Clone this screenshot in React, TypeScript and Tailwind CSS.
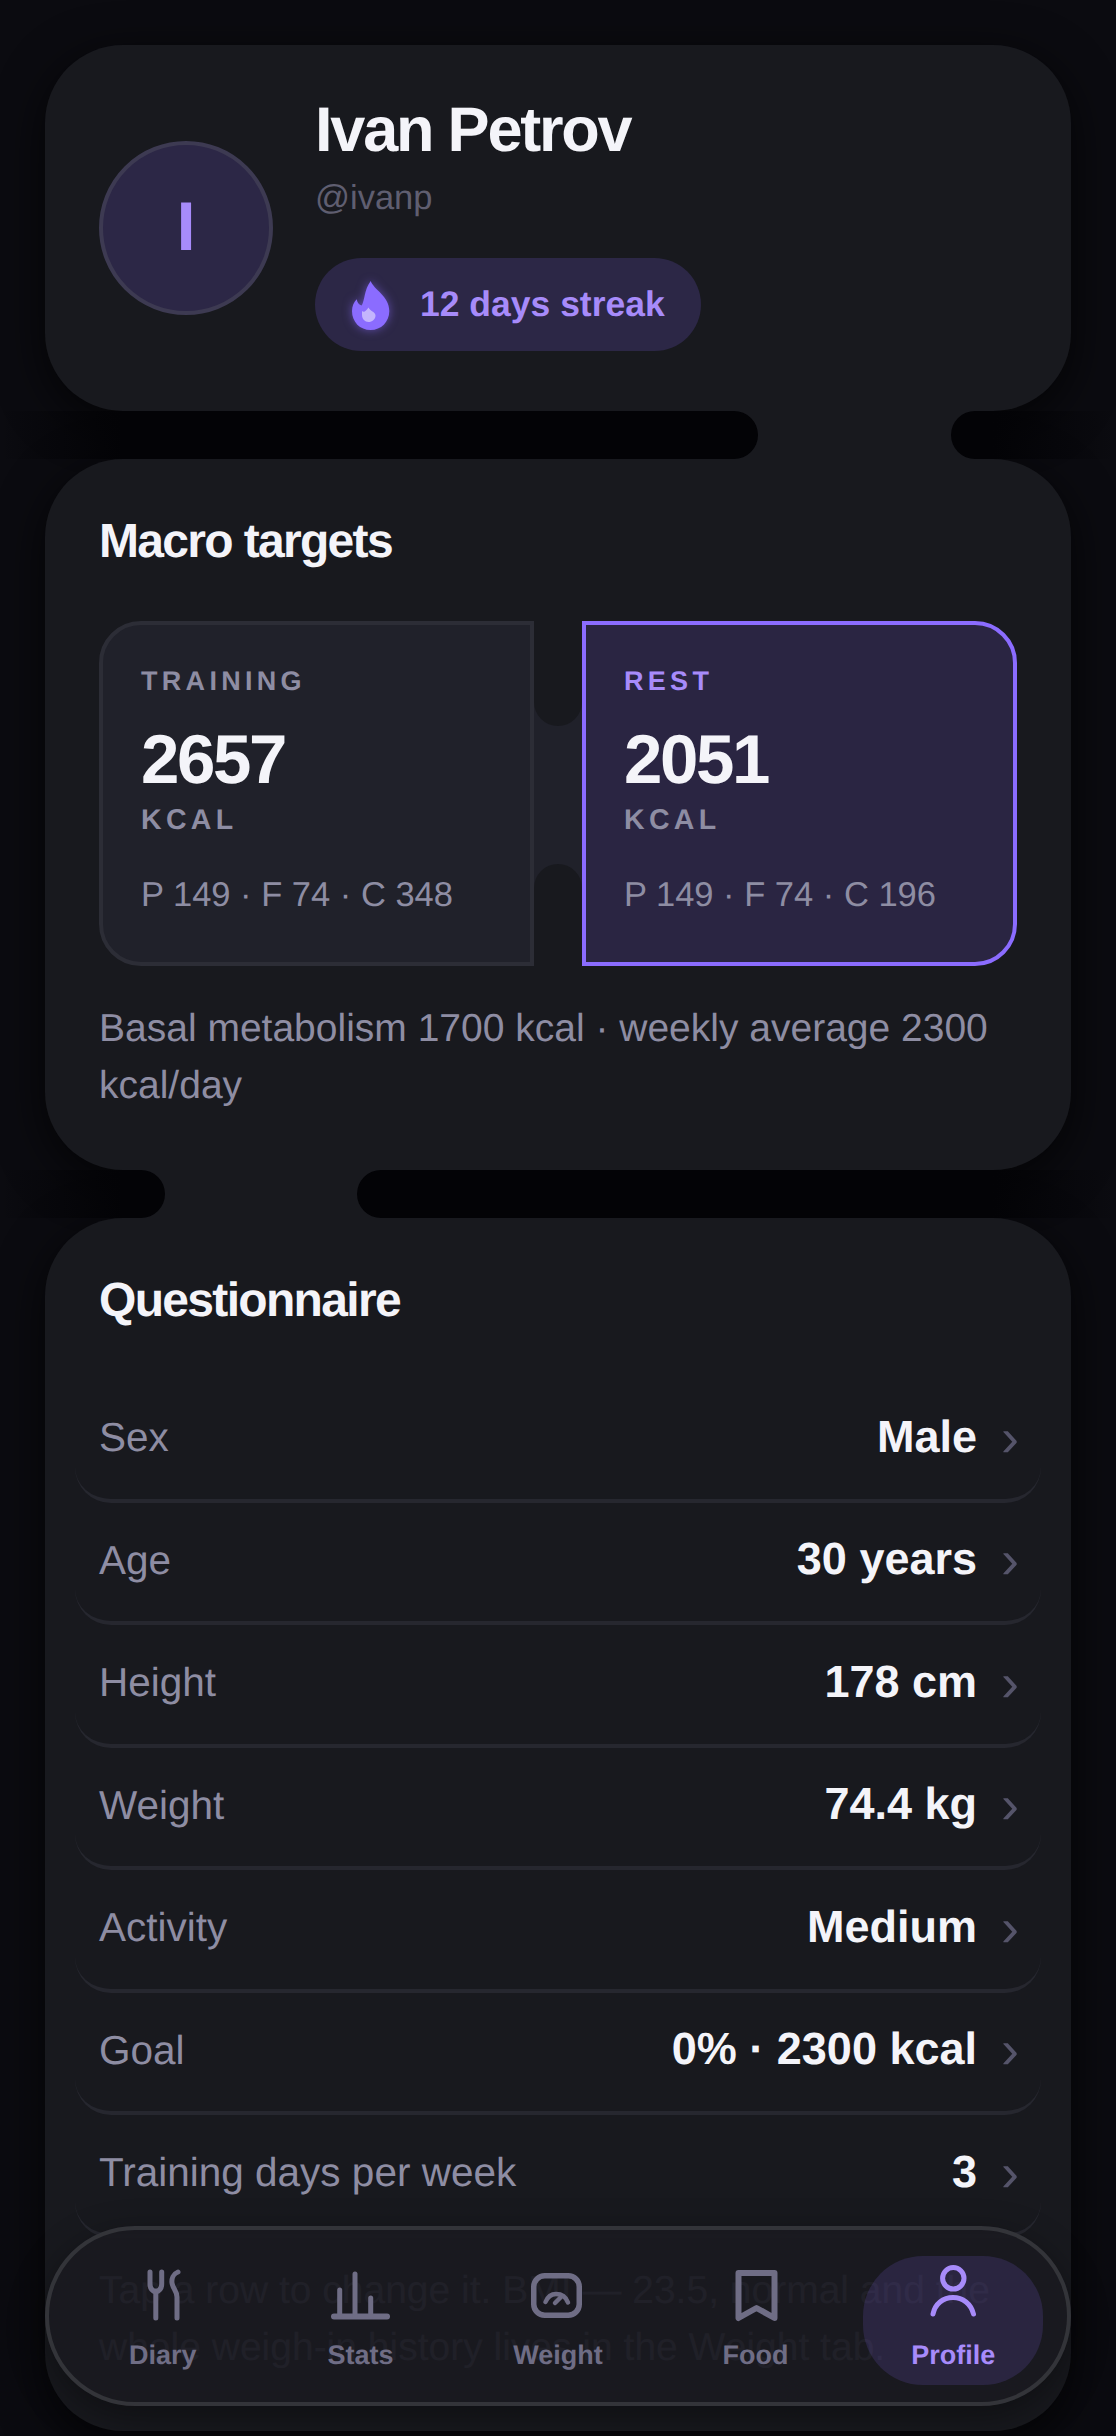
import React from "react";

const rows = [
  { label: "Sex", value: "Male" },
  { label: "Age", value: "30 years" },
  { label: "Height", value: "178 cm" },
  { label: "Weight", value: "74.4 kg" },
  { label: "Activity", value: "Medium" },
  { label: "Goal", value: "0% · 2300 kcal" },
  { label: "Training days per week", value: "3" },
];

function FlameIcon() {
  return (
    <svg width="42" height="54" viewBox="0 0 42 54" className="shrink-0 [filter:drop-shadow(0_0_5px_rgba(139,108,255,0.55))]">
      <path
        fill="#8b6cff"
        d="M20.7 3C24 12 39.3 18 39.3 33C39.3 44 31 52 20.7 52C10 52 2 44 2 33C2 28 4 24 6.7 21.3C7.5 25 9 27 11.7 27.5C15 22 14 12 20.7 3Z"
      />
      <path
        fill="#c4b5fd"
        d="M12 33C14 35 16 33 18.5 29.5C20 33 25.5 34 25.5 37.5C25.5 41.5 22 44 18.5 44C15 44 12 41 12 37Z"
      />
    </svg>
  );
}

function DiaryIcon() {
  return (
    <svg width="72" height="72" viewBox="0 0 72 72" fill="none" stroke="currentColor" strokeWidth="5" strokeLinecap="round" strokeLinejoin="round">
      <path d="M23 11V23C23 27 25 30 28.8 31C32.6 30 34.7 27 34.7 23V11" />
      <path d="M28.8 30V57" />
      <path d="M51 11C46 13 44.5 18 45 22C45.5 27 50 30 50 36V57" />
    </svg>
  );
}

function StatsIcon() {
  return (
    <svg width="72" height="72" viewBox="0 0 72 72" fill="none" stroke="currentColor" strokeWidth="5" strokeLinecap="round">
      <path d="M10 55.5H63" strokeWidth="6" />
      <path d="M15.7 55V29" />
      <path d="M31 55V13" />
      <path d="M46.7 55V37" />
    </svg>
  );
}

function WeightIcon() {
  return (
    <svg width="72" height="72" viewBox="0 0 72 72" fill="none" stroke="currentColor" strokeWidth="5.5" strokeLinecap="round" strokeLinejoin="round">
      <rect x="11.75" y="14.75" width="45.5" height="39.5" rx="11" />
      <path d="M23.5 41C26 35 29 33 34 33C40 33 44 36 46 41.5" strokeWidth="4.5" />
      <path d="M33 42L39 36" strokeWidth="4.5" />
    </svg>
  );
}

function FoodIcon() {
  return (
    <svg width="72" height="72" viewBox="0 0 72 72" fill="none" stroke="currentColor" strokeWidth="6" strokeLinejoin="round">
      <path d="M18.5 12H54.5V57L36.5 47L18.5 57Z" />
    </svg>
  );
}

function ProfileIcon() {
  return (
    <svg width="72" height="72" viewBox="0 0 72 72" fill="none" stroke="currentColor" strokeWidth="5" strokeLinecap="round">
      <circle cx="36.3" cy="17.3" r="10.7" />
      <path d="M16 53C18 43 26 36.5 36 36.5C46 36.5 54 43 56.5 53" />
    </svg>
  );
}

const navItems = [
  { label: "Diary", Icon: DiaryIcon },
  { label: "Stats", Icon: StatsIcon },
  { label: "Weight", Icon: WeightIcon },
  { label: "Food", Icon: FoodIcon },
  { label: "Profile", Icon: ProfileIcon, active: true },
];

function MacroTile({ name, kcal, macros, active }: { name: string; kcal: string; macros: string; active?: boolean }) {
  return (
    <div
      className={
        active
          ? "flex-1 h-[345px] border-4 border-[#8b6cff] bg-[#2a2542] rounded-r-[42px] pl-[38px] pt-[40px]"
          : "flex-1 h-[345px] border-4 border-[#2c2d36] bg-[#20212a] rounded-l-[42px] pl-[38px] pt-[40px]"
      }
    >
      <div className={active ? "text-[27px] leading-[33px] font-bold tracking-[4.3px] text-[#a78bfa]" : "text-[27px] leading-[33px] font-bold tracking-[4.3px] text-[#8e8da3]"}>
        {name}
      </div>
      <div className="mt-[29px] text-[69px] leading-[66px] font-bold tracking-[-2.4px] text-[#f4f4f9]">{kcal}</div>
      <div className="mt-[11px] text-[28.5px] leading-[33px] font-bold tracking-[4.3px] text-[#8e8da3]">KCAL</div>
      <div className="mt-[34px] text-[34.5px] leading-[48px] text-[#8e8da3]">{macros}</div>
    </div>
  );
}

// Bridge between two stacked cards: dark gutter with a card-coloured neck cut through it.
function CardBridge({ leftWidth, neckWidth, rightWidth }: { leftWidth: "narrow" | "wide"; neckWidth: string; rightWidth: "narrow" | "wide" }) {
  return (
    <div className="relative z-10 -mx-[45px] flex h-12">
      <div className="w-[123px] bg-gradient-to-r from-[#03030600] to-[#030306]" />
      <div className="flex flex-1 bg-[#18191e]">
        <div className={leftWidth === "narrow" ? "w-[42px] rounded-r-3xl bg-[#030306]" : "flex-1 rounded-r-3xl bg-[#030306]"} />
        <div className={neckWidth} />
        <div className={rightWidth === "narrow" ? "w-[42px] rounded-l-3xl bg-[#030306]" : "flex-1 rounded-l-3xl bg-[#030306]"} />
      </div>
      <div className="w-[123px] bg-gradient-to-l from-[#03030600] to-[#030306]" />
    </div>
  );
}

export default function App() {
  return (
    <div className="relative h-[2436px] overflow-hidden bg-[#0b0b10] font-['Liberation_Sans',Arial,sans-serif] [text-rendering:geometricPrecision]">
      <div className="flex flex-col px-[45px] pt-[45px]">
        {/* profile header */}
        <section className="flex h-[366px] items-center gap-[42px] rounded-[78px] bg-[#18191e] px-[54px] shadow-[0_12px_48px_rgba(0,0,0,0.7)]">
          <div className="flex h-[174px] w-[174px] shrink-0 items-center justify-center rounded-full border-4 border-[#3d3a52] bg-[#2c2746] pb-[3px] text-[69px] font-bold text-[#a78bfa]">
            I
          </div>
          <div className="mb-[9px] flex flex-col">
            <h1 className="text-[63px] leading-[69px] font-bold tracking-[-2.2px] text-[#f4f4f9]">Ivan Petrov</h1>
            <div className="mt-[5.5px] text-[34.5px] leading-[54px] text-[#5f5e70]">@ivanp</div>
            <div className="mt-[33.5px] flex h-[93px] w-fit items-center gap-[28px] rounded-full bg-[#2c2746] pl-[35px] pr-[36px]">
              <FlameIcon />
              <span className="text-[35.5px] font-bold text-[#a78bfa]">12 days streak</span>
            </div>
          </div>
        </section>

        <CardBridge leftWidth="wide" neckWidth="w-[193px]" rightWidth="narrow" />

        <section className="rounded-[78px] bg-[#18191e] px-[54px] pt-[54px] pb-[56.5px] shadow-[0_12px_48px_rgba(0,0,0,0.7)]">
          <h2 className="text-[48px] leading-[57px] font-bold tracking-[-1.68px] text-[#f4f4f9]">Macro targets</h2>
          <div className="mt-[51px] flex">
            <MacroTile name="TRAINING" kcal="2657" macros="P 149 · F 74 · C 348" />
            <div className="flex w-12 flex-col justify-between bg-[#20212a]">
              <div className="h-[105px] rounded-b-3xl bg-[#18191e]" />
              <div className="h-[102px] rounded-t-3xl bg-[#18191e]" />
            </div>
            <MacroTile name="REST" kcal="2051" macros="P 149 · F 74 · C 196" active />
          </div>
          <p className="mt-[33.5px] text-[39px] leading-[57px] text-[#8e8da3]">Basal metabolism 1700 kcal · weekly average 2300 kcal/day</p>
        </section>

        <CardBridge leftWidth="narrow" neckWidth="w-[192px]" rightWidth="wide" />

        <section className="rounded-[78px] bg-[#18191e] px-[54px] pt-[54px] pb-[55px] shadow-[0_12px_48px_rgba(0,0,0,0.7)]">
          <h2 className="text-[48px] leading-[57px] font-bold tracking-[-1.68px] text-[#f4f4f9]">Questionnaire</h2>
          <div className="mx-[-24px] mt-[51px] flex flex-col">
            {rows.map((r) => (
              <div key={r.label} className="flex h-[122.5px] items-center justify-between rounded-[36px] border-b-4 border-[#26272f] px-[24px] pb-[3px]">
                <span className="text-[40.5px] text-[#8e8da3]">{r.label}</span>
                <span className="flex items-center gap-[24px]">
                  <span className="mb-[3px] text-[45px] font-bold text-[#f4f4f9]">{r.value}</span>
                  <span className="-mr-[2px] text-[54px] leading-none text-[#55546a]">›</span>
                </span>
              </div>
            ))}
          </div>
          <p className="mt-[24.5px] text-[39px] leading-[57px] text-[#8e8da3]">
            Tap a row to change it. BMI — 23.5, normal and the whole weigh-in history lives in the Weight tab.
          </p>
        </section>
      </div>

      {/* floating tab bar */}
      <nav className="absolute bottom-[30px] left-[45px] flex h-[180px] w-[1026px] items-center gap-[18px] rounded-full border-4 border-[#333439] bg-[#191a20]/94 px-[24px] pt-[9px] shadow-[0_12px_36px_rgba(0,0,0,0.4)]">
        {navItems.map(({ label, Icon, active }) => (
          <div
            key={label}
            className={
              active
                ? "flex h-[129px] flex-1 flex-col items-center justify-center rounded-[60px] bg-[#8b6cff]/15 pb-[9px] text-[#a78bfa]"
                : "flex h-[129px] flex-1 flex-col items-center justify-center pb-[9px] text-[#6f6d85]"
            }
          >
            <Icon />
            <span className="mt-[5.5px] text-[27px] leading-[32px] font-bold">{label}</span>
          </div>
        ))}
      </nav>
    </div>
  );
}
